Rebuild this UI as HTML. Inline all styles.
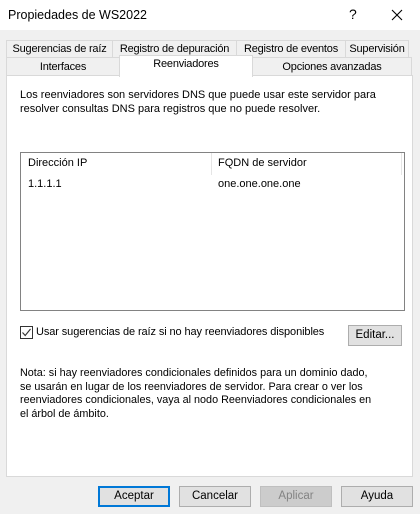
<!DOCTYPE html>
<html><head><meta charset="utf-8"><style>
*{margin:0;padding:0;box-sizing:border-box}
body{width:420px;height:514px;background:#f0f0f0;font-family:"Liberation Sans",sans-serif;font-size:11px;color:#000;position:relative;overflow:hidden}
.a{position:absolute;white-space:nowrap}
.title{left:0;top:0;width:420px;height:30px;background:#fff}
.tab{position:absolute;background:#f0f0f0;border:1px solid #d9d9d9;text-align:center;line-height:16px;font-size:11px;white-space:nowrap;overflow:hidden;letter-spacing:-0.2px}
.btn{position:absolute;top:486px;height:21px;width:72px;background:#e1e1e1;border:1px solid #adadad;text-align:center;line-height:19px;font-size:11.5px}
</style></head><body>
<div class="a title"></div>
<div class="a" style="left:8px;top:8px;font-size:12.5px">Propiedades de WS2022</div>
<div class="a" style="left:349px;top:6px;font-size:14px">?</div>
<svg class="a" style="left:391px;top:9px" width="12" height="12"><path d="M1 1L11 11M11 1L1 11" stroke="#000" stroke-width="1.1"/></svg>
<div class="a" style="left:6px;top:75px;width:407px;height:402px;background:#fff;border:1px solid #d9d9d9"></div>
<div class="tab" style="left:6px;top:40px;width:107px;height:18px">Sugerencias de raíz</div>
<div class="tab" style="left:112px;top:40px;width:125px;height:18px">Registro de depuración</div>
<div class="tab" style="left:236px;top:40px;width:110px;height:18px">Registro de eventos</div>
<div class="tab" style="left:345px;top:40px;width:64px;height:18px">Supervisión</div>
<div class="tab" style="left:6px;top:57px;width:114px;height:19px;line-height:18px">Interfaces</div>
<div class="tab" style="left:252px;top:57px;width:160px;height:19px;line-height:18px">Opciones avanzadas</div>
<div class="tab" style="left:119px;top:55px;width:134px;height:22px;background:#fff;border-bottom:none;line-height:17px">Reenviadores</div>
<div class="a" style="left:20px;top:88px;line-height:14px;font-size:11px">Los reenviadores son servidores DNS que puede usar este servidor para<br>resolver consultas DNS para registros que no puede resolver.</div>
<div class="a" style="left:20px;top:152px;width:385px;height:159px;border:1px solid #828282;background:#fff"></div>
<div class="a" style="left:211px;top:153px;width:1px;height:22px;background:#e5e5e5"></div>
<div class="a" style="left:401px;top:153px;width:1px;height:22px;background:#e5e5e5"></div>
<div class="a" style="left:28px;top:157px">Dirección IP</div>
<div class="a" style="left:218px;top:157px">FQDN de servidor</div>
<div class="a" style="left:28px;top:178px">1.1.1.1</div>
<div class="a" style="left:218px;top:178px">one.one.one.one</div>
<div class="a" style="left:20px;top:326px;width:13px;height:13px;border:1px solid #333;background:#fff"></div>
<svg class="a" style="left:21px;top:327px" width="11" height="11"><path d="M1.5 5.5L4.2 8.5L9.5 2" stroke="#333" stroke-width="1.1" fill="none"/></svg>
<div class="a" style="left:36px;top:326px;letter-spacing:-0.1px">Usar sugerencias de raíz si no hay reenviadores disponibles</div>
<div class="btn" style="left:348px;top:325px;width:54px;height:21px">Editar...</div>
<div class="a" style="left:20px;top:367px;line-height:13.5px;font-size:10.8px">Nota: si hay reenviadores condicionales definidos para un dominio dado,<br>se usarán en lugar de los reenviadores de servidor. Para crear o ver los<br>reenviadores condicionales, vaya al nodo Reenviadores condicionales en<br>el árbol de ámbito.</div>
<div class="btn" style="left:98px;border:2px solid #0078d7;line-height:17px">Aceptar</div>
<div class="btn" style="left:179px">Cancelar</div>
<div class="btn" style="left:260px;background:#cccccc;border-color:#bfbfbf;color:#838383">Aplicar</div>
<div class="btn" style="left:341px">Ayuda</div>
</body></html>
